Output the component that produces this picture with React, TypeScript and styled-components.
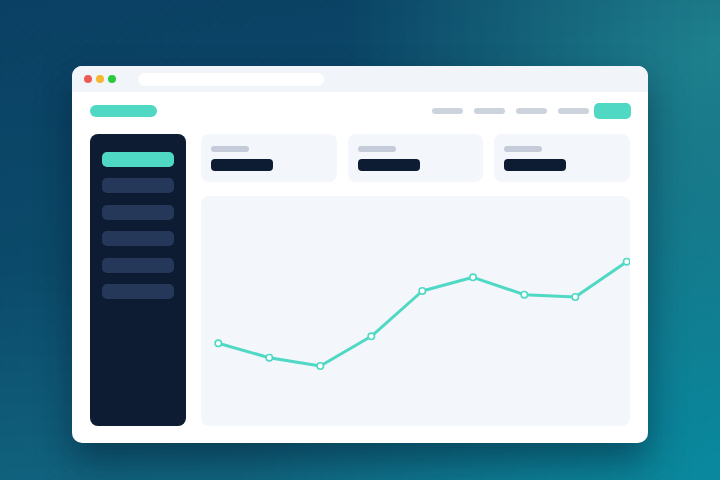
import React from 'react';
import styled, { createGlobalStyle } from 'styled-components';

const GlobalStyle = createGlobalStyle`
  html, body {
    margin: 0;
    padding: 0;
  }
  body {
    font-family: Inter, "Noto Sans", sans-serif;
  }
`;

const Backdrop = styled.div`
  width: 720px;
  height: 480px;
  overflow: hidden;
  display: flex;
  justify-content: center;
  align-items: flex-start;
  padding-top: 66px;
  box-sizing: border-box;
  background-color: #0b4a68;
  background-image:
    radial-gradient(rgba(255, 255, 255, 0.05) 1px, transparent 1.2px),
    radial-gradient(circle at 100% 10%, rgba(36, 146, 152, 0.75), transparent 45%),
    radial-gradient(circle at 100% 100%, rgba(8, 140, 160, 0.9), transparent 55%),
    linear-gradient(170deg, #0a4063 0%, #0b4a6a 45%, #136f88 100%);
  background-size: 16px 16px, 100% 100%, 100% 100%, 100% 100%;
`;

const Window = styled.div`
  width: 576px;
  height: 377px;
  background: #ffffff;
  border-radius: 10px;
  overflow: hidden;
  display: flex;
  flex-direction: column;
  box-shadow: 0 18px 36px rgba(2, 20, 40, 0.45);
`;

const TitleBar = styled.div`
  height: 26px;
  flex-shrink: 0;
  background: #f1f4f8;
  display: flex;
  align-items: center;
  padding-left: 12px;
`;

const Lights = styled.div`
  display: flex;
  gap: 4px;
  margin-right: 22px;
`;

const Light = styled.span<{ $color: string }>`
  width: 8px;
  height: 8px;
  border-radius: 50%;
  background: ${(p) => p.$color};
`;

const UrlBar = styled.div`
  width: 186px;
  height: 13px;
  border-radius: 7px;
  background: #ffffff;
`;

const Content = styled.div`
  flex: 1;
  padding: 11px 17px 17px 18px;
  display: flex;
  flex-direction: column;
  gap: 15px;
`;

const Header = styled.div`
  height: 16px;
  display: flex;
  align-items: center;
  justify-content: space-between;
`;

const Logo = styled.div`
  width: 67px;
  height: 12px;
  border-radius: 6px;
  background: #4fd8c4;
`;

const Nav = styled.nav`
  display: flex;
  align-items: center;
  gap: 11px;
`;

const NavLink = styled.span`
  width: 31px;
  height: 6px;
  border-radius: 3px;
  background: #cdd3dd;
`;

const NavButton = styled.span`
  width: 37px;
  height: 16px;
  border-radius: 5px;
  background: #4fd8c4;
  margin-left: -6px;
`;

const Body = styled.div`
  flex: 1;
  display: flex;
  gap: 15px;
  margin-right: 1px;
`;

const Sidebar = styled.aside`
  width: 96px;
  flex-shrink: 0;
  background: #0d1b33;
  border-radius: 8px;
  padding: 18px 12px;
  box-sizing: border-box;
  display: flex;
  flex-direction: column;
  gap: 11.4px;
`;

const SideItem = styled.div<{ $active?: boolean }>`
  height: 15px;
  border-radius: 5px;
  background: ${(p) => (p.$active ? '#4fd8c4' : '#253859')};
`;

const Main = styled.main`
  flex: 1;
  display: flex;
  flex-direction: column;
  gap: 14px;
`;

const Cards = styled.div`
  display: grid;
  grid-template-columns: repeat(3, 1fr);
  gap: 11px;
`;

const Card = styled.div`
  height: 48px;
  border-radius: 8px;
  background: #f3f6fa;
  padding: 12px 10px 0;
  box-sizing: border-box;
  display: flex;
  flex-direction: column;
  gap: 7px;
`;

const CardLabel = styled.div`
  width: 38px;
  height: 6px;
  border-radius: 3px;
  background: #c5cbd8;
`;

const CardValue = styled.div`
  width: 62px;
  height: 12px;
  border-radius: 4px;
  background: #0d1b33;
`;

const ChartPanel = styled.div`
  flex: 1;
  border-radius: 8px;
  background: #f3f6fb;
  overflow: hidden;
`;

const ChartSvg = styled.svg`
  display: block;
  width: 100%;
  height: 100%;
`;

const points: [number, number][] = [
  [17.3, 147.3],
  [68.3, 161.7],
  [119.3, 170],
  [170.3, 140.3],
  [221.3, 95],
  [272, 81.3],
  [323.3, 98.7],
  [374.3, 101],
  [425.7, 65.7],
];

const App: React.FC = () => {
  const line = points.map(([x, y]) => `${x},${y}`).join(' ');

  return (
    <>
      <GlobalStyle />
      <Backdrop>
        <Window>
          <TitleBar>
            <Lights>
              <Light $color="#f05a55" />
              <Light $color="#f6b730" />
              <Light $color="#2bc840" />
            </Lights>
            <UrlBar />
          </TitleBar>
          <Content>
            <Header>
              <Logo />
              <Nav>
                <NavLink />
                <NavLink />
                <NavLink />
                <NavLink />
                <NavButton />
              </Nav>
            </Header>
            <Body>
              <Sidebar>
                <SideItem $active />
                <SideItem />
                <SideItem />
                <SideItem />
                <SideItem />
                <SideItem />
              </Sidebar>
              <Main>
                <Cards>
                  {[0, 1, 2].map((i) => (
                    <Card key={i}>
                      <CardLabel />
                      <CardValue />
                    </Card>
                  ))}
                </Cards>
                <ChartPanel>
                  <ChartSvg viewBox="0 0 429 230" preserveAspectRatio="none">
                    <polyline
                      points={line}
                      fill="none"
                      stroke="#4fd8c4"
                      strokeWidth={3}
                      strokeLinejoin="round"
                      strokeLinecap="round"
                    />
                    {points.map(([x, y], i) => (
                      <circle
                        key={i}
                        cx={x}
                        cy={y}
                        r={3.2}
                        fill="#ffffff"
                        stroke="#4fd8c4"
                        strokeWidth={1.6}
                      />
                    ))}
                  </ChartSvg>
                </ChartPanel>
              </Main>
            </Body>
          </Content>
        </Window>
      </Backdrop>
    </>
  );
};

export default App;
